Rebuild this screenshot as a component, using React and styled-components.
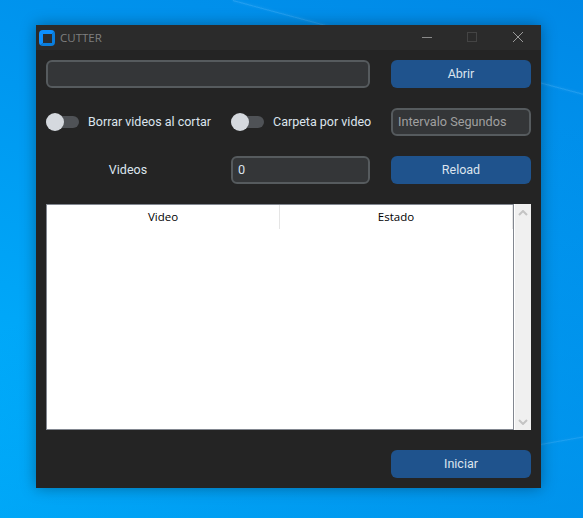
import React from 'react';
import styled, { createGlobalStyle } from 'styled-components';

const GlobalStyle = createGlobalStyle`
  html, body {
    margin: 0;
    padding: 0;
  }
`;

function Toggle({ label }) {
  return (
    <ToggleRow>
      <Track>
        <Knob />
      </Track>
      <ToggleLabel>{label}</ToggleLabel>
    </ToggleRow>
  );
}

function App() {
  return (
    <Desktop>
      <GlobalStyle />
      <Streak />
      <LowStreak />
      <Window>
        <TitleBar>
          <Logo />
          <Title>CUTTER</Title>
          <WindowButtons>
            <WindowButton>
              <svg width="12" height="12" viewBox="0 0 12 12">
                <path d="M2 6.5h10" stroke="#8a8a8a" strokeWidth="1" />
              </svg>
            </WindowButton>
            <WindowButton>
              <svg width="12" height="12" viewBox="0 0 12 12">
                <rect x="1.5" y="1.5" width="9" height="9" fill="none" stroke="#444" strokeWidth="1" />
              </svg>
            </WindowButton>
            <WindowButton>
              <svg width="12" height="12" viewBox="0 0 12 12">
                <path d="M1 1l10 10M11 1L1 11" stroke="#9a9a9a" strokeWidth="1" />
              </svg>
            </WindowButton>
          </WindowButtons>
        </TitleBar>
        <Body>
          <Field wide />
          <ActionButton>Abrir</ActionButton>

          <Toggle label="Borrar videos al cortar" />
          <Toggle label="Carpeta por video" />
          <Field placeholder="Intervalo Segundos" />

          <CenterLabel>Videos</CenterLabel>
          <Field defaultValue="0" />
          <ActionButton>Reload</ActionButton>

          <TableBox>
            <TableMain>
              <HeaderRow>
                <HeaderCell>Video</HeaderCell>
                <HeaderCell>Estado</HeaderCell>
              </HeaderRow>
            </TableMain>
            <ScrollBar>
              <svg width="10" height="6" viewBox="0 0 10 6">
                <path d="M1 5l4-4 4 4" fill="none" stroke="#c4c4c4" strokeWidth="2" />
              </svg>
              <svg width="10" height="6" viewBox="0 0 10 6">
                <path d="M1 1l4 4 4-4" fill="none" stroke="#c4c4c4" strokeWidth="2" />
              </svg>
            </ScrollBar>
          </TableBox>

          <BottomButton>Iniciar</BottomButton>
        </Body>
      </Window>
    </Desktop>
  );
}

const Desktop = styled.div`
  position: relative;
  width: 583px;
  height: 518px;
  box-sizing: border-box;
  padding: 25px 42px 30px 36px;
  overflow: hidden;
  background:
    linear-gradient(160deg, rgba(0, 180, 255, 0) 45%, rgba(0, 130, 225, 0.55) 100%),
    linear-gradient(200deg, #0088e6 0%, #0098f0 40%, #00b4ff 100%);
`;

const Streak = styled.div`
  position: absolute;
  top: 0;
  left: 233px;
  width: 380px;
  height: 1px;
  background: rgba(120, 200, 255, 0.3);
  box-shadow: 0 0 3px rgba(120, 200, 255, 0.3);
  transform: rotate(15deg);
  transform-origin: left top;
`;

const LowStreak = styled.div`
  position: absolute;
  top: 445px;
  left: 535px;
  width: 60px;
  height: 1px;
  background: rgba(120, 200, 255, 0.25);
  box-shadow: 0 0 3px rgba(120, 200, 255, 0.2);
  transform: rotate(-10deg);
  transform-origin: left top;
`;

const Window = styled.div`
  position: relative;
  width: 505px;
  height: 463px;
  background: #242424;
  box-shadow: 0 0 14px rgba(0, 0, 0, 0.35);
`;

const TitleBar = styled.div`
  display: flex;
  align-items: center;
  height: 25px;
  background: #2b2b2b;
  padding-left: 3px;
`;

const Logo = styled.div`
  width: 16px;
  height: 16px;
  box-sizing: border-box;
  border-style: solid;
  border-width: 4px 3px 3px 4px;
  border-color: #0d90ff #0a7ede #0a7ede #0d90ff;
  border-radius: 4px;
  background: #2a2e33;
`;

const Title = styled.span`
  margin: 0 0 1px 5px;
  font: 11.5px "Open Sans", sans-serif;
  color: #7f7f7f;
`;

const WindowButtons = styled.div`
  display: flex;
  align-self: flex-start;
  margin-left: auto;
`;

const WindowButton = styled.div`
  display: flex;
  align-items: center;
  justify-content: center;
  width: 46px;
  height: 24px;
`;

const Body = styled.div`
  display: grid;
  grid-template-columns: 164px 139px 140px;
  grid-template-rows: 28px 28px 28px 226px 28px;
  gap: 20px 21px;
  padding: 10px 10px 10px 10px;
  font: 12.5px Roboto, sans-serif;
`;

const Field = styled.input.attrs({ type: 'text' })`
  grid-column: ${(props) => (props.wide ? 'span 2' : 'auto')};
  box-sizing: border-box;
  width: 100%;
  height: 28px;
  min-width: 0;
  padding: 0 5px 1px;
  background: #343638;
  border: 2px solid #565b5e;
  border-radius: 6px;
  outline: none;
  font: 12.7px Roboto, sans-serif;
  color: #dce4ee;
  &::placeholder {
    color: #a0a0a0;
    opacity: 1;
  }
`;

const ActionButton = styled.div`
  display: flex;
  align-items: center;
  justify-content: center;
  box-sizing: border-box;
  height: 28px;
  padding-bottom: 2px;
  background: #1f538d;
  border-radius: 6px;
  color: #dce4ee;
  font: 12.5px Roboto, sans-serif;
`;

const BottomButton = styled(ActionButton)`
  grid-column: 3;
`;

const ToggleRow = styled.div`
  display: flex;
  align-items: center;
  white-space: nowrap;
`;

const Track = styled.div`
  position: relative;
  flex: none;
  width: 33px;
  height: 12px;
  border-radius: 6px;
  background: #4f5256;
`;

const Knob = styled.div`
  position: absolute;
  top: -3px;
  left: 0;
  width: 18px;
  height: 18px;
  border-radius: 50%;
  background: #d5d9de;
`;

const ToggleLabel = styled.span`
  margin: 0 0 2px 9px;
  color: #dce4ee;
`;

const CenterLabel = styled.div`
  display: flex;
  align-items: center;
  justify-content: center;
  padding-bottom: 2px;
  color: #dce4ee;
`;

const TableBox = styled.div`
  grid-column: 1 / -1;
  display: flex;
  background: #fff;
`;

const TableMain = styled.div`
  flex: 1;
  box-sizing: border-box;
  border: 1px solid #828790;
  background: #fff;
`;

const HeaderRow = styled.div`
  display: grid;
  grid-template-columns: 233px 233px;
  height: 24px;
`;

const HeaderCell = styled.div`
  display: flex;
  align-items: center;
  justify-content: center;
  box-sizing: border-box;
  padding-bottom: 1px;
  border-right: 1px solid #e5e5e5;
  font: 11.5px "Open Sans", sans-serif;
  color: #000;
`;

const ScrollBar = styled.div`
  display: flex;
  flex-direction: column;
  align-items: center;
  justify-content: space-between;
  box-sizing: border-box;
  width: 17px;
  padding: 6px 1px 5px 0;
  border-left: 1px solid #fff;
  background: #f0f0f0;
`;

export default App;
